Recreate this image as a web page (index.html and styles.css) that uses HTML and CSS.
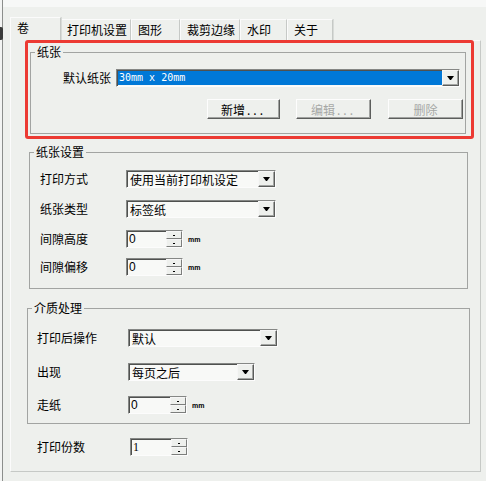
FILE: index.html
```html
<!DOCTYPE html>
<html lang="zh-CN">
<head>
<meta charset="utf-8">
<title>卷</title>
<link rel="stylesheet" href="styles.css">
</head>
<body>
<div class="page">
  <div class="edge"><span class="edge-mark"></span></div>
  <div class="main">
    <div class="topband"></div>
    <div class="tabs">
      <div class="tab active t1">卷</div>
      <div class="tab t2">打印机设置</div>
      <div class="tab t3">图形</div>
      <div class="tab t4">裁剪边缘</div>
      <div class="tab t5">水印</div>
      <div class="tab t6">关于</div>
    </div>
    <div class="panel">
      <fieldset class="group g-paper">
        <legend>纸张</legend>
        <div class="frow paper-row">
          <span class="lbl lbl-paper">默认纸张</span>
          <div class="select blue w-paper"><span class="val">30mm x 20mm</span><span class="dd"><i class="tri"></i></span></div>
        </div>
        <div class="btnrow">
          <button class="btn b1">新增<span class="dots">...</span></button>
          <button class="btn b2 dis">编辑<span class="dots">...</span></button>
          <button class="btn b3 dis">删除</button>
        </div>
      </fieldset>

      <fieldset class="group g-set">
        <legend>纸张设置</legend>
        <div class="frow r1">
          <span class="lbl">打印方式</span>
          <div class="select w-s1"><span class="val">使用当前打印机设定</span><span class="dd"><i class="tri"></i></span></div>
        </div>
        <div class="frow r2">
          <span class="lbl">纸张类型</span>
          <div class="select w-s1"><span class="val">标签纸</span><span class="dd"><i class="tri"></i></span></div>
        </div>
        <div class="frow r3">
          <span class="lbl">间隙高度</span>
          <div class="spin w-sp1"><span class="num">0</span><span class="sbs"><i class="sb"></i><i class="sb"></i></span></div>
          <span class="unit">mm</span>
        </div>
        <div class="frow r4">
          <span class="lbl">间隙偏移</span>
          <div class="spin w-sp1"><span class="num">0</span><span class="sbs"><i class="sb"></i><i class="sb"></i></span></div>
          <span class="unit">mm</span>
        </div>
      </fieldset>

      <fieldset class="group g-media">
        <legend>介质处理</legend>
        <div class="frow r1">
          <span class="lbl">打印后操作</span>
          <div class="select w-s2"><span class="val">默认</span><span class="dd"><i class="tri"></i></span></div>
        </div>
        <div class="frow r2">
          <span class="lbl">出现</span>
          <div class="select w-s3"><span class="val">每页之后</span><span class="dd"><i class="tri"></i></span></div>
        </div>
        <div class="frow r3">
          <span class="lbl">走纸</span>
          <div class="spin w-sp2"><span class="num">0</span><span class="sbs"><i class="sb"></i><i class="sb"></i></span></div>
          <span class="unit">mm</span>
        </div>
      </fieldset>

      <div class="frow copies">
        <span class="lbl">打印份数</span>
        <div class="spin w-sp3"><span class="num serif">1</span><span class="sbs"><i class="sb"></i><i class="sb"></i></span></div>
      </div>
    </div>
  </div>
  <div class="highlight"></div>
</div>
</body>
</html>
```

FILE: styles.css
```css
html, body {
  margin: 0;
  padding: 0;
}
body {
  width: 486px;
  height: 481px;
  overflow: hidden;
  background: #eef0ed;
  font-family: "Noto Sans CJK SC", "Liberation Sans", sans-serif;
  font-size: 12px;
  line-height: 14px;
  color: #000;
}
.page {
  position: relative;
  display: flex;
  height: 481px;
}
.edge {
  position: relative;
  width: 2px;
  flex: none;
  background: #f3f4f3;
  border-right: 1px solid #8c8e8c;
}
.edge-mark {
  position: absolute;
  left: 0;
  top: 27px;
  width: 3px;
  height: 13px;
  background: #3a3a3a;
  border-radius: 0 2px 2px 0;
}
.main {
  flex: 1;
  display: flex;
  flex-direction: column;
}
.topband {
  height: 7px;
  background: #f7f8f7;
}
.tabs {
  display: flex;
  align-items: flex-end;
  height: 23px;
  margin: 10px 0 0 7px;
}
.tab {
  box-sizing: border-box;
  height: 21px;
  padding-left: 6px;
  border: 1px solid #c6c9c6;
  border-bottom: none;
  border-left-color: #fbfbfb;
  border-top-color: #fbfbfb;
  box-shadow: 1px 0 0 #d8dbd8;
  line-height: 19px;
  background: #eef0ed;
  white-space: nowrap;
}
.tab.active {
  position: relative;
  z-index: 2;
  height: 24px;
  margin-bottom: -1px;
  line-height: 20px;
}
.t1 { width: 51px; }
.t2 { width: 70px; padding-left: 5px; }
.t3 { width: 49px; }
.t4 { width: 60px; }
.t5 { width: 47px; }
.t6 { width: 46px; }

.panel {
  box-sizing: border-box;
  width: 471px;
  height: 432px;
  margin-left: 7px;
  border: 1px solid #c6c9c6;
  border-left-color: #fbfbfb;
  border-top-color: #fbfbfb;
  background: #eef0ed;
}

.group {
  box-sizing: border-box;
  border: 1px solid #a2a4a2;
  padding: 0;
  min-width: 0;
}
.group legend {
  padding: 0 2px;
  margin-left: 4px;
  line-height: 14px;
  font-size: 12px;
}
.frow {
  display: flex;
  align-items: center;
  height: 18px;
}
.lbl {
  flex: none;
  white-space: nowrap;
}

/* paper group */
.g-paper {
  margin: 4px 0 0 19px;
  width: 436px;
}
.paper-row {
  margin-top: 10px;
  padding-left: 32px;
  gap: 5px;
}
.lbl-paper { width: 48px; }
.w-paper { width: 344px; }
.btnrow {
  display: flex;
  height: 20px;
  margin: 12px 0 14px 176px;
}

/* paper settings group */
.g-set {
  margin: 11px 0 0 18px;
  width: 439px;
  padding-bottom: 12px;
}
.g-set .frow { padding-left: 10px; }
.g-set .lbl { width: 86px; }
.g-set .r1 { margin-top: 11px; }
.g-set .r2 { margin-top: 12px; }
.g-set .r3 { margin-top: 12px; }
.g-set .r4 { margin-top: 10px; }

/* media group */
.g-media {
  margin: 12px 0 0 16px;
  width: 443px;
  padding-bottom: 9px;
}
.g-media .frow { padding-left: 9px; }
.g-media .lbl { width: 91px; }
.g-media .r1 { margin-top: 14px; }
.g-media .r2 { margin-top: 16px; }
.g-media .r3 { margin-top: 15px; }

.copies {
  margin-top: 14px;
  padding-left: 26px;
}
.copies .lbl { width: 93px; }

/* select */
.select {
  box-sizing: border-box;
  display: flex;
  align-items: stretch;
  height: 18px;
  border: 1px solid;
  border-color: #858785 #fcfcfc #fcfcfc #858785;
  box-shadow: inset 1px 1px 0 #4f514f;
  background: #f8f9f7;
}
.select .val {
  flex: 1;
  padding: 1px 0 0 3px;
  white-space: nowrap;
  overflow: hidden;
  line-height: 15px;
}
.w-s1 { width: 150px; }
.w-s2 { width: 150px; }
.w-s3 { width: 127px; }
.select.blue .val {
  margin: 1px 0 1px 1px;
  padding: 0 0 0 1px;
  background: #0078d7;
  color: #fff;
  font-family: "DejaVu Sans Mono", "Liberation Mono", monospace;
  font-size: 10px;
  line-height: 14px;
}
.dd {
  box-sizing: border-box;
  flex: none;
  width: 17px;
  border: 1px solid;
  border-color: #f6f6f6 #5a5c5a #5a5c5a #f6f6f6;
  box-shadow: inset -1px -1px 0 #a3a5a3;
  background: #eef0ed;
  display: flex;
  align-items: center;
  justify-content: center;
}
.tri {
  display: block;
  width: 1px;
  height: 0;
  border-left: 3px solid transparent;
  border-right: 3px solid transparent;
  border-top: 4px solid #000;
}

/* spin */
.spin {
  box-sizing: border-box;
  display: flex;
  height: 18px;
  border: 1px solid;
  border-color: #858785 #fcfcfc #fcfcfc #858785;
  box-shadow: inset 1px 1px 0 #4f514f;
  background: #f8f9f7;
}
.w-sp1 { width: 57px; }
.w-sp2 { width: 59px; }
.w-sp3 { width: 58px; }
.num {
  flex: 1;
  padding: 1px 0 0 2px;
  font-family: "Liberation Sans", sans-serif;
  font-size: 12px;
  line-height: 15px;
}
.num.serif {
  font-family: "Liberation Serif", serif;
}
.sbs {
  flex: none;
  width: 16px;
  display: flex;
  flex-direction: column;
}
.sb {
  box-sizing: border-box;
  flex: 1;
  border: 1px solid;
  border-color: #f6f6f6 #7c7e7c #7c7e7c #f6f6f6;
  background: #eef0ed;
  display: flex;
  align-items: center;
  justify-content: center;
}
.sb::after {
  content: "";
  display: block;
  width: 2px;
  height: 1px;
  background: #000;
}
.unit {
  margin-left: 5px;
  font-family: "Liberation Sans", sans-serif;
  font-size: 7px;
  font-weight: bold;
  line-height: 8px;
  padding-top: 2px;
}

/* buttons */
.btn {
  box-sizing: border-box;
  height: 20px;
  padding: 0;
  border: 1px solid;
  border-color: #fdfdfd #5c5e5c #5c5e5c #fdfdfd;
  box-shadow: inset -1px -1px 0 #a0a2a0;
  background: #eef0ed;
  font-family: "Noto Sans CJK SC", sans-serif;
  font-size: 12px;
  line-height: 17px;
  color: #000;
  text-align: center;
  white-space: nowrap;
}
.btn .dots {
  letter-spacing: 3px;
  margin-left: 2px;
}
.b1 { width: 73px; }
.b2 { width: 75px; margin-left: 16px; }
.b3 { width: 75px; margin-left: 17px; }
.btn.dis { color: #a6a8a6; }

/* red annotation frame */
.highlight {
  position: absolute;
  left: 25px;
  top: 40px;
  width: 449px;
  height: 99px;
  box-sizing: border-box;
  border: 3px solid #ec3a33;
  border-radius: 3px;
  z-index: 5;
}
```
